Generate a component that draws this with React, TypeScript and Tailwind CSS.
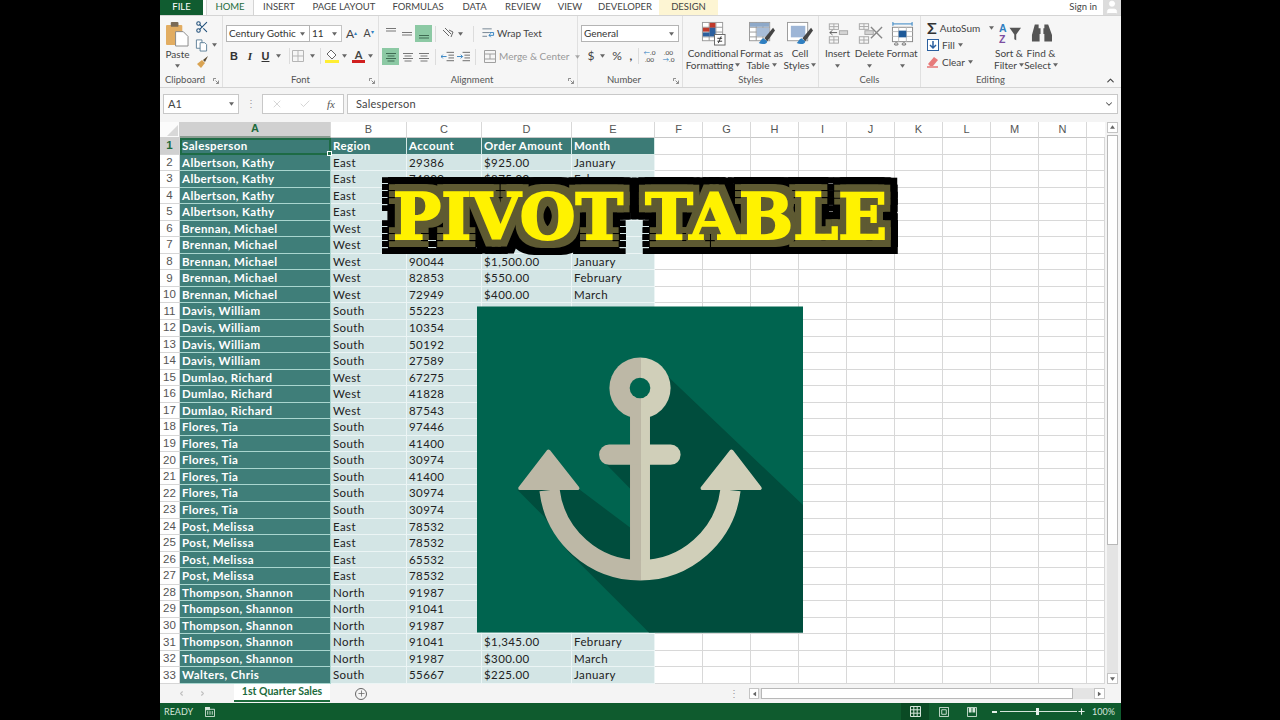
import type { ReactNode } from "react";
import { Scissors, Check, X, Plus, ChevronDown, ChevronUp, ChevronRight, ChevronLeft, User } from "lucide-react";

const uiFont = "font-['Lato',sans-serif]";

const tabs = [
  { label: "HOME", w: "w-[48px]" },
  { label: "INSERT", w: "w-[50px]" },
  { label: "PAGE LAYOUT", w: "w-[80px]" },
  { label: "FORMULAS", w: "w-[68px]" },
  { label: "DATA", w: "w-[45px]" },
  { label: "REVIEW", w: "w-[52px]" },
  { label: "VIEW", w: "w-[42px]" },
  { label: "DEVELOPER", w: "w-[68px]" },
];

const columns = ["F", "G", "H", "I", "J", "K", "L", "M", "N"];

type Row = [string, string, string?, string?, string?];

const rows: Row[] = [
  ["Albertson, Kathy", "East", "29386", "$925.00", "January"],
  ["Albertson, Kathy", "East", "74830", "$875.00", "February"],
  ["Albertson, Kathy", "East"],
  ["Albertson, Kathy", "East"],
  ["Brennan, Michael", "West"],
  ["Brennan, Michael", "West"],
  ["Brennan, Michael", "West", "90044", "$1,500.00", "January"],
  ["Brennan, Michael", "West", "82853", "$550.00", "February"],
  ["Brennan, Michael", "West", "72949", "$400.00", "March"],
  ["Davis, William", "South", "55223"],
  ["Davis, William", "South", "10354"],
  ["Davis, William", "South", "50192"],
  ["Davis, William", "South", "27589"],
  ["Dumlao, Richard", "West", "67275"],
  ["Dumlao, Richard", "West", "41828"],
  ["Dumlao, Richard", "West", "87543"],
  ["Flores, Tia", "South", "97446"],
  ["Flores, Tia", "South", "41400"],
  ["Flores, Tia", "South", "30974"],
  ["Flores, Tia", "South", "41400"],
  ["Flores, Tia", "South", "30974"],
  ["Flores, Tia", "South", "30974"],
  ["Post, Melissa", "East", "78532"],
  ["Post, Melissa", "East", "78532"],
  ["Post, Melissa", "East", "65532"],
  ["Post, Melissa", "East", "78532"],
  ["Thompson, Shannon", "North", "91987"],
  ["Thompson, Shannon", "North", "91041"],
  ["Thompson, Shannon", "North", "91987"],
  ["Thompson, Shannon", "North", "91041", "$1,345.00", "February"],
  ["Thompson, Shannon", "North", "91987", "$300.00", "March"],
  ["Walters, Chris", "South", "55667", "$225.00", "January"],
];

const gridCols = "grid grid-rows-[minmax(0,1fr)] grid-cols-[20px_151px_76px_75px_90px_83px_repeat(9,48px)_18px]";
const cellFont = "font-['Lato',sans-serif] text-[11.5px] tracking-[0.4px] whitespace-nowrap";
const cellText = `${cellFont} leading-[15px] pl-[2px] overflow-hidden`;

const Caret = ({ className = "" }: { className?: string }) => (
  <svg viewBox="0 0 6 4" className={`w-[5px] h-[4px] shrink-0 ${className}`}>
    <path d="M0 0h6L3 4z" fill="#666" />
  </svg>
);

const Sep = ({ className = "h-[16px]" }: { className?: string }) => (
  <div className={`w-px bg-[#dcdcdc] shrink-0 ${className}`} />
);

const Lines = ({ widths, y = 0, green = false }: { widths: number[]; y?: number; green?: boolean }) => (
  <svg viewBox="0 0 12 12" className="w-[12px] h-[12px]">
    {widths.map((w, i) => (
      <rect key={i} x={(12 - w) / 2} y={y + i * 2.5} width={w} height="1" fill={green ? "#3f6b52" : "#777"} />
    ))}
  </svg>
);

const Group = ({ w, label, launcher, shift, children }: { w: string; label: string; launcher?: boolean; shift?: boolean; children: ReactNode }) => (
  <div className={`${w} h-full flex flex-col border-r border-[#e0e0e0] relative shrink-0`}>
    <div className="flex-1 flex min-h-0">{children}</div>
    <div className={`h-[14px] flex items-center justify-center text-[9.5px] text-[#555] ${shift ? "pr-[12px]" : ""}`}>{label}</div>
    {launcher && (
      <svg viewBox="0 0 7 7" className="absolute right-[3px] bottom-[3px] w-[6px] h-[6px]">
        <path d="M.5.5h3M.5.5v3M6.5 3v3.500h-3M3 3l3 3" stroke="#777" fill="none" />
      </svg>
    )}
  </div>
);

const BigButton = ({ w, lines, caret, children }: { w: string; lines: string[]; caret?: boolean; children: ReactNode }) => (
  <div className={`${w} flex flex-col items-center shrink-0`}>
    <div className="h-[26px] mt-[4px] flex items-center justify-center">{children}</div>
    <div className="mt-[1px] text-[10px] leading-[12px] text-[#444] text-center whitespace-nowrap flex flex-col items-center">
      {lines.map((l, i) => (
        <span key={l} className="flex items-center gap-[2px]">
          {l}
          {caret && lines.length > 1 && i === lines.length - 1 && <Caret />}
        </span>
      ))}
      {caret && lines.length === 1 && <Caret className="mt-[5px]" />}
    </div>
  </div>
);

const MiniTable = () => (
  <g stroke="#9a9a9a" fill="none" strokeWidth="1">
    <rect x="1.500" y="1.500" width="21" height="19" fill="#fff" />
    <path d="M1.500 6.500h21M1.500 11.500h21M1.500 16.500h21M8.500 1.500v19M15.500 1.500v19" />
  </g>
);

const ConditionalIcon = () => (
  <svg viewBox="0 0 26 26" className="w-[25px] h-[25px]">
    <MiniTable />
    <rect x="9" y="2" width="6" height="5" fill="#c0392b" />
    <rect x="2" y="7" width="7" height="4" fill="#c0392b" />
    <rect x="9" y="7" width="6" height="9" fill="#2b5f9e" />
    <rect x="2" y="12" width="7" height="4" fill="#2b5f9e" />
    <rect x="14" y="14" width="11" height="11" fill="#fff" stroke="#666" />
    <path d="M17 18h5M17 21h5M18 23l3-7" stroke="#333" strokeWidth="1" fill="none" />
  </svg>
);

const Brush = () => (
  <g>
    <path d="M26 7 17 18l3 3L28 10z" fill="#444" />
    <path d="M16 18c-3 1-3 4-5 5 4 2 9 1 9-2z" fill="#2f7fc1" />
  </g>
);

const TableIcon = () => (
  <svg viewBox="0 0 29 26" className="w-[28px] h-[25px]">
    <MiniTable />
    <rect x="2" y="2" width="20" height="4" fill="#8ea9c9" />
    <rect x="9" y="7" width="13" height="9" fill="#a8bdd8" />
    <Brush />
  </svg>
);

const StylesIcon = () => (
  <svg viewBox="0 0 29 26" className="w-[28px] h-[25px]">
    <rect x="1.500" y="1.500" width="21" height="19" fill="#fff" stroke="#9a9a9a" />
    <rect x="5" y="5" width="15" height="12" fill="#9db5d6" />
    <Brush />
  </svg>
);

const InsertIcon = () => (
  <svg viewBox="0 0 24 24" className="w-[22px] h-[23px]" fill="none" stroke="#a5a5a5">
    <rect x="2.500" y="1.500" width="10" height="6" />
    <path d="M7.500 1.500v6M2.500 4.500h10" />
    <rect x="2.500" y="15.500" width="10" height="7" />
    <path d="M7.500 15.500v7M2.500 19h10" />
    <path d="M11 11H3m3-2.500L3 11l3 2.500" stroke="#555" />
    <rect x="13.500" y="9" width="9" height="4" fill="#d5d5d5" />
  </svg>
);

const DeleteIcon = () => (
  <svg viewBox="0 0 28 24" className="w-[26px] h-[23px]" fill="none" stroke="#a5a5a5">
    <rect x="2.500" y="1.500" width="10" height="6" />
    <path d="M7.500 1.500v6M2.500 4.500h10" />
    <rect x="2.500" y="15.500" width="10" height="7" />
    <path d="M7.500 15.500v7M2.500 19h10" />
    <rect x="8.500" y="9" width="9" height="4" fill="#d5d5d5" />
    <path d="m15 5 12 12M27 5 15 17" stroke="#888" strokeWidth="1.500" />
  </svg>
);

const FormatIcon = () => (
  <svg viewBox="0 0 24 26" className="w-[23px] h-[25px]" fill="none">
    <path d="M2 3h20M2 1v4M22 1v4" stroke="#2f7fc1" />
    <rect x="1.500" y="6.500" width="21" height="15" stroke="#888" fill="#fff" />
    <path d="M1.500 11h21M1.500 16h21M8 6.500v15M16 6.500v15" stroke="#bbb" />
    <rect x="8" y="10" width="8" height="7" fill="#1f5a99" />
    <path d="M4 25c-2-3 5-3 3 0zM12 25c-2-3 5-3 3 0z" stroke="#666" />
  </svg>
);

const SheetHeader = () => (
  <div className={`${gridCols} h-[16px] text-[11px] text-[#555]`}>
    <div className="relative bg-[#fbfbfb] border-r border-b border-[#d0d0d0]">
      <svg viewBox="0 0 12 12" className="absolute right-[1px] bottom-[1px] w-[11px] h-[11px]">
        <path d="M12 0v12H0z" fill="#d8d8d8" />
      </svg>
    </div>
    {["A", "B", "C", "D", "E", ...columns].map((c) => (
      <div
        key={c}
        className={`flex items-center justify-center pb-[1px] border-r border-[#d8d8d8] font-['Liberation_Sans',sans-serif] ${
          c === "A" ? "bg-[#d0d0d0] text-[#1d6b3c] font-bold border-b-2 border-b-[#8a9c91]" : "bg-white border-b border-b-[#c8c8c8]"
        }`}
      >
        {c}
      </div>
    ))}
    <div className="bg-white border-b border-[#d0d0d0]" />
  </div>
);

const RowNumber = ({ n }: { n: number }) => (
  <div
    className={`flex items-center justify-center border-r border-b border-[#d6d6d6] font-['Liberation_Sans',sans-serif] text-[11.5px] ${
      n === 1 ? "bg-[#d0d0d0] text-[#1d6b3c] font-bold" : "bg-white text-[#555]"
    }`}
  >
    {n}
  </div>
);

const EmptyCells = () => (
  <>
    {columns.map((c) => (
      <div key={c} className="border-r border-b border-[#d8d8d8] bg-white" />
    ))}
    <div className="border-b border-[#d8d8d8] border-r bg-white" />
  </>
);

const HeaderRow = () => (
  <div className={`${gridCols} h-[16.55px]`}>
    <RowNumber n={1} />
    <div className={`${cellFont} relative bg-[#3c7b76] text-white font-bold border-2 border-[#1d6b45] leading-[11px]`}>
      Salesperson
      <span className="absolute -right-[3px] -bottom-[3px] w-[5px] h-[5px] bg-[#1d6b45] border border-white" />
    </div>
    {["Region", "Account", "Order Amount", "Month"].map((h) => (
      <div key={h} className={`${cellText} bg-[#3c7b76] text-white font-bold border-r border-b border-[#d5e9e6]`}>
        {h}
      </div>
    ))}
    <EmptyCells />
  </div>
);

const DataRow = ({ row, n }: { row: Row; n: number }) => (
  <div className={`${gridCols} h-[16.55px]`}>
    <RowNumber n={n} />
    <div className={`${cellText} bg-[#3f7e79] text-white font-bold border-b border-r border-[#a9d6cf]`}>{row[0]}</div>
    {[row[1], row[2], row[3], row[4]].map((v, i) => (
      <div key={i} className={`${cellText} bg-[#d3e5e5] text-[#222] border-b border-r border-[#ecf5f5]`}>
        {v}
      </div>
    ))}
    <EmptyCells />
  </div>
);

const Ribbon = () => (
  <div className={`h-[72px] flex bg-[#f6f6f6] border-b border-[#d4d4d4] ${uiFont}`}>
    <Group w="w-[63px]" label="Clipboard" launcher shift>
      <div className="w-[35px] flex flex-col items-center shrink-0 pt-[6px]">
        <svg viewBox="0 0 24 26" className="w-[23px] h-[25px]">
          <rect x="0" y="3" width="17" height="21" rx="1" fill="#e2ad62" />
          <rect x="5" y="0" width="8" height="5" rx="1" fill="#7a6a55" />
          <path d="M10 10h8l5 5v10H10z" fill="#fff" stroke="#888" />
        </svg>
        <span className="mt-[1px] text-[10px] leading-[12px] text-[#444]">Paste</span>
        <Caret className="mt-[4px]" />
      </div>
      <div className="flex flex-col pt-[4px] gap-[3.500px]">
        <Scissors size={14} strokeWidth={1.8} className="text-[#1f4f7a]" />
        <div className="flex items-center gap-[4px]">
          <svg viewBox="0 0 14 14" className="w-[13px] h-[14px]" fill="#fff" stroke="#5b7d96">
            <path d="M1.500 1.500h6v9h-6z" />
            <path d="M5.500 4.500h5l2 2v7h-7z" />
          </svg>
          <Caret />
        </div>
        <svg viewBox="0 0 14 14" className="w-[14px] h-[14px]">
          <path d="M13 1 8 5l2 2z" fill="#5a4a30" />
          <path d="M7 5 2 9l4 4 4-5z" fill="#d9a352" />
        </svg>
      </div>
    </Group>

    <Group w="w-[156px]" label="Font" launcher>
      <div className="flex flex-col pl-[3px] pt-[9px] gap-[6px]">
        <div className="flex items-center h-[17px]">
          <div className="w-[84px] h-full bg-white border border-[#b4b4b4] flex items-center justify-between pl-[2px] pr-[4px] text-[10px] text-[#333]">
            Century Gothic
            <Caret />
          </div>
          <div className="w-[32px] h-full bg-white border border-l-0 border-[#c4c4c4] flex items-center justify-between pl-[2px] pr-[4px] text-[10px] text-[#333]">
            11
            <Caret />
          </div>
          <span className="ml-[1px] w-[17px] text-center text-[12px] text-[#444]">
            A<sup className="text-[6px] text-[#2f7fc1]">▴</sup>
          </span>
          <span className="w-[17px] text-center text-[10.5px] text-[#444]">
            A<sup className="text-[6px] text-[#2f7fc1]">▾</sup>
          </span>
        </div>
        <div className="flex items-center h-[16px] text-[#333] text-[11px]">
          <span className="w-[16px] text-center font-bold font-['Liberation_Sans',sans-serif]">B</span>
          <span className="w-[16px] text-center italic font-bold font-['Liberation_Serif',serif]">I</span>
          <span className="w-[15px] text-center underline font-bold font-['Liberation_Sans',sans-serif]">U</span>
          <Caret className="ml-[3px] mr-[8px]" />
          <Sep />
          <svg viewBox="0 0 12 12" className="w-[12px] h-[12px] ml-[2px]" fill="none" stroke="#b5b5b5">
            <path d="M.5.5h11v11H.5zM6 .5v11M.5 6h11" />
          </svg>
          <Caret className="ml-[6px] mr-[5px]" />
          <Sep />
          <svg viewBox="0 0 14 14" className="w-[14px] h-[14px] ml-[4px]">
            <path d="M6 1l5 5-4 4-5-5z" fill="#fff" stroke="#666" />
            <rect x="0" y="11" width="14" height="3" fill="#ffee33" />
          </svg>
          <Caret className="ml-[3px] mr-[5px]" />
          <span className="relative w-[13px] h-[14px] text-center text-[11px] leading-[11px] font-bold border-b-[3px] border-[#d11f1f] text-[#444]">A</span>
          <Caret className="ml-[3px]" />
        </div>
      </div>
    </Group>

    <Group w="w-[199px]" label="Alignment" launcher shift>
      <div className="flex flex-col pl-[3px] pt-[9px] gap-[6px]">
        <div className="flex items-center h-[17px]">
          <div className="w-[17px] flex justify-center"><Lines widths={[10, 10]} /></div>
          <div className="w-[16px] flex justify-center"><Lines widths={[10, 10]} y={4} /></div>
          <div className="w-[17px] h-[17px] bg-[#8cc9a4] flex justify-center items-center"><Lines widths={[10, 10]} y={7} green /></div>
          <Sep className="h-[16px] ml-[3px]" />
          <svg viewBox="0 0 14 14" className="w-[14px] h-[14px] ml-[5px]" fill="none" stroke="#666">
            <path d="M2 3 8 9M4 1l6 6M8 3l4 2-2 5" />
          </svg>
          <Caret className="ml-[3px] mr-[10px]" />
          <Sep />
          <svg viewBox="0 0 14 14" className="w-[14px] h-[13px] ml-[7px] mr-[2px]" fill="none" stroke="#6f7f8f">
            <path d="M1 2h10M1 6h8M1 10h5" />
            <path d="M9 6h4v3H8m2-2-2 2 2 2" stroke="#2f7fc1" />
          </svg>
          <span className="text-[10px] text-[#444] whitespace-nowrap">Wrap Text</span>
        </div>
        <div className="flex items-center h-[17px]">
          <div className="w-[17px] h-[17px] bg-[#8cc9a4] flex justify-center items-center"><Lines widths={[10, 7, 10, 7]} y={2} green /></div>
          <div className="w-[16px] flex justify-center ml-[1px]"><Lines widths={[10, 7, 10, 7]} y={2} /></div>
          <div className="w-[16px] flex justify-center"><Lines widths={[10, 7, 10, 7]} y={2} /></div>
          <Sep className="h-[16px] ml-[3px]" />
          <svg viewBox="0 0 14 12" className="w-[13px] h-[12px] ml-[5px]" fill="none" stroke="#666">
            <path d="M6 1h8M8 4h6M8 7h6M6 10h8" />
            <path d="M6 5.500H0m2-2-2 2 2 2" stroke="#2f7fc1" />
          </svg>
          <svg viewBox="0 0 14 12" className="w-[13px] h-[12px] ml-[3px] mr-[5px]" fill="none" stroke="#666">
            <path d="M6 1h8M8 4h6M8 7h6M6 10h8" />
            <path d="M0 5.500h6m-2-2 2 2-2 2" stroke="#2f7fc1" />
          </svg>
          <Sep />
          <svg viewBox="0 0 12 13" className="w-[12px] h-[13px] ml-[8px] mr-[3px]" fill="none" stroke="#a0a0a0">
            <path d="M.5.5h11v12H.5zM.5 4h11M.5 9h11M6 4v5" />
          </svg>
          <span className="text-[10px] text-[#999] whitespace-nowrap">Merge &amp; Center</span>
          <Caret className="ml-[6px] opacity-50" />
        </div>
      </div>
    </Group>

    <Group w="w-[105px]" label="Number" launcher shift>
      <div className="flex flex-col pl-[3px] pt-[9px] gap-[6px]">
        <div className="w-[98px] h-[17px] bg-white border border-[#b4b4b4] flex items-center justify-between pl-[2px] pr-[4px] text-[10px] text-[#333]">
          General
          <Caret />
        </div>
        <div className="flex items-center h-[16px] pl-[5px] text-[12px] text-[#444]">
          <span className="w-[10px] text-center">$</span>
          <Caret className="ml-[4px] mr-[5px]" />
          <span className="w-[14px] text-center">%</span>
          <span className="w-[14px] text-center font-bold">,</span>
          <Sep className="h-[16px] mr-[1px]" />
          <span className="w-[19px] text-center text-[6.5px] leading-[7px] text-[#444]"><span className="text-[#2f7fc1]">←</span>.0<br />.00</span>
          <span className="w-[19px] text-center text-[6.5px] leading-[7px] text-[#444]">.00<br /><span className="text-[#2f7fc1]">→</span>.0</span>
        </div>
      </div>
    </Group>

    <Group w="w-[136px]" label="Styles">
      <div className="flex pl-[3px]">
        <BigButton w="w-[54px]" lines={["Conditional", "Formatting"]} caret><ConditionalIcon /></BigButton>
        <BigButton w="w-[43px]" lines={["Format as", "Table"]} caret><TableIcon /></BigButton>
        <BigButton w="w-[34px]" lines={["Cell", "Styles"]} caret><StylesIcon /></BigButton>
      </div>
    </Group>

    <Group w="w-[102px]" label="Cells">
      <div className="flex pl-[3px]">
        <BigButton w="w-[31px]" lines={["Insert"]} caret><InsertIcon /></BigButton>
        <BigButton w="w-[33px]" lines={["Delete"]} caret><DeleteIcon /></BigButton>
        <BigButton w="w-[32px]" lines={["Format"]} caret><FormatIcon /></BigButton>
      </div>
    </Group>

    <div className="flex-1 h-full flex flex-col relative">
      <div className="flex-1 flex min-h-0">
        <div className="w-[72px] pl-[6px] pt-[4px] flex flex-col gap-[1px] text-[10px] text-[#444] shrink-0">
          <div className="flex items-center h-[16px] gap-[3px]">
            <span className="w-[12px] text-[16px] leading-[16px] font-bold text-center text-[#333]">Σ</span>
            AutoSum
            <Caret className="ml-[6px]" />
          </div>
          <div className="flex items-center h-[16px] gap-[3px]">
            <svg viewBox="0 0 12 12" className="w-[12px] h-[12px]">
              <rect x=".5" y=".5" width="11" height="11" fill="#fff" stroke="#2b5f9e" />
              <path d="M6 2v7M3 6l3 3 3-3" stroke="#2b5f9e" strokeWidth="1.500" fill="none" />
            </svg>
            Fill
            <Caret />
          </div>
          <div className="flex items-center h-[16px] gap-[3px]">
            <svg viewBox="0 0 12 12" className="w-[12px] h-[12px]">
              <path d="M7 1l4 3-5 6H3L1 8z" fill="#e77a7a" />
              <path d="M0 11h11" stroke="#d33" />
            </svg>
            Clear
            <Caret />
          </div>
        </div>
        <BigButton w="w-[32px]" lines={["Sort &", "Filter"]} caret>
          <svg viewBox="0 0 24 24" className="w-[23px] h-[23px]">
            <path d="M12 6h12l-5 7v6l-2-1v-5z" fill="#555" />
            <text x="1" y="10" fontSize="11" fill="#2f7fc1" fontFamily="Liberation Sans" fontWeight="bold">A</text>
            <text x="1" y="22" fontSize="11" fill="#7c4ea0" fontFamily="Liberation Sans" fontWeight="bold">Z</text>
          </svg>
        </BigButton>
        <BigButton w="w-[32px]" lines={["Find &", "Select"]} caret>
          <svg viewBox="0 0 22 22" className="w-[21px] h-[22px]" fill="#555">
            <path d="M4 2h4v4h2v6H9v8H1v-7zM14 2h4l4 11v7h-8v-8h-1V6h1z" />
          </svg>
        </BigButton>
      </div>
      <div className="h-[14px] w-[139px] flex items-center justify-center text-[9.5px] text-[#555]">Editing</div>
      <ChevronUp size={11} strokeWidth={2.5} className="absolute right-[5px] bottom-[1px] text-[#444]" />
    </div>
  </div>
);

const FormulaBar = () => (
  <div className={`h-[20px] mt-[6px] flex items-stretch px-[3px] ${uiFont}`}>
    <div className="w-[76px] bg-white border border-[#c8c8c8] flex items-center justify-between pl-[4px] pr-[4px] text-[11px] text-[#444]">
      A1
      <Caret />
    </div>
    <div className="w-[23px] flex items-center justify-center text-[#999] text-[10px]">⋮</div>
    <div className="w-[82px] bg-white border border-[#c8c8c8] flex items-center justify-between px-[8px]">
      <X size={12} strokeWidth={1.2} className="text-[#bbb]" />
      <Check size={12} strokeWidth={1.2} className="text-[#bbb]" />
      <span className="font-['Liberation_Serif',serif] italic text-[11px] text-[#555]">fx</span>
    </div>
    <div className="flex-1 ml-[3px] bg-white border border-[#c8c8c8] flex items-center justify-between pl-[8px] pr-[3px] text-[11px] text-[#444] tracking-[0.2px]">
      Salesperson
      <ChevronDown size={10} strokeWidth={2.5} className="text-[#555]" />
    </div>
  </div>
);

const ScrollButton = ({ children, className = "" }: { children: ReactNode; className?: string }) => (
  <div className={`bg-white border border-[#c4c4c4] flex items-center justify-center shrink-0 ${className}`}>{children}</div>
);

const TabStrip = () => (
  <div className={`h-[19px] flex items-center bg-[#f4f4f4] ${uiFont}`}>
    <div className="w-[74px] flex items-center justify-start gap-[14px] pl-[18px] text-[#c0c0c0] shrink-0">
      <ChevronLeft size={7} strokeWidth={4} />
      <ChevronRight size={7} strokeWidth={4} />
    </div>
    <div className="w-[96px] h-[18px] self-start bg-white border-b-2 border-[#1d6b3c] text-[#1d6b3c] font-bold text-[10.5px] flex items-center justify-center shrink-0">
      1st Quarter Sales
    </div>
    <div className="w-[62px] flex justify-center shrink-0">
      <div className="w-[12px] h-[12px] rounded-full border border-[#666] flex items-center justify-center">
        <Plus size={9} strokeWidth={2} className="text-[#666]" />
      </div>
    </div>
    <div className="w-[351px] text-right text-[#999] text-[10px] pr-[4px] shrink-0">⋮</div>
    <div className="flex items-center h-[11px] ml-[6px] w-[356px] bg-[#e4e4e4] shrink-0">
      <ScrollButton className="w-[10px] h-[11px]"><Caret className="rotate-90" /></ScrollButton>
      <div className="w-[312px] h-[11px] bg-white border border-[#b8b8b8] ml-[2px] shrink-0" />
      <div className="flex-1" />
      <ScrollButton className="w-[11px] h-[11px]"><Caret className="-rotate-90" /></ScrollButton>
    </div>
  </div>
);

const StatusBar = () => (
  <div className={`h-[17px] flex items-center bg-[#0f5b2e] text-[#d5e5da] text-[9px] ${uiFont}`}>
    <span className="ml-[4px] w-[41px]">READY</span>
    <svg viewBox="0 0 11 11" className="w-[10px] h-[10px]" fill="none" stroke="#d5e5da">
      <path d="M.5 2.500h10v8H.5zM3 4.500v4M5.500 4.500v4M8 4.500v4" />
      <rect x="0" y="0" width="5" height="3" fill="#d5e5da" />
    </svg>
    <div className="ml-[686px] w-[28px] h-full bg-[#0a4a24] flex items-center justify-center shrink-0">
      <svg viewBox="0 0 11 11" className="w-[11px] h-[11px]" fill="none" stroke="#d5e5da">
        <path d="M.5.5h10v10H.5zM3.800.5v10M7.200.5v10M.5 3.800h10M.5 7.200h10" />
      </svg>
    </div>
    <div className="w-[29px] flex justify-center shrink-0">
      <svg viewBox="0 0 11 11" className="w-[10px] h-[10px]" fill="none" stroke="#d5e5da">
        <path d="M.5.5h10v10H.5zM3 3h5v5H3z" />
      </svg>
    </div>
    <div className="w-[27px] flex justify-center shrink-0">
      <svg viewBox="0 0 11 11" className="w-[10px] h-[10px]">
        <path d="M.5.5h10v10H.5z" fill="none" stroke="#d5e5da" />
        <path d="M2 1h3v5H2zM6 1h3v5H6z" fill="#d5e5da" />
      </svg>
    </div>
    <span className="ml-[7px] w-[5px] h-[2px] bg-[#e6f0ea] shrink-0" />
    <div className="relative ml-[3px] w-[77px] h-px bg-[#d5e5da] shrink-0">
      <span className="absolute left-[36px] -top-[3px] w-[3px] h-[7px] bg-[#e6f0ea]" />
    </div>
    <Plus size={9} strokeWidth={3} className="text-[#e6f0ea]" />
    <span className="ml-[6px]">100%</span>
  </div>
);

const AnchorShapes = ({ fill }: { fill: string }) => (
  <g fill={fill}>
    <circle cx="490" cy="245" r="92" />
    <rect x="460" y="300" width="60" height="510" />
    <rect x="367" y="415" width="245" height="61" rx="30" />
    <path d="M218 552A274 274 0 0 0 762 552" fill="none" stroke={fill} strokeWidth="61" />
    <path d="M215 436 302 546H130Z" stroke={fill} strokeWidth="12" strokeLinejoin="round" />
    <path d="M765 436 850 546H678Z" stroke={fill} strokeWidth="12" strokeLinejoin="round" />
  </g>
);

const AnchorImage = () => (
  <svg viewBox="0 0 980 980" className="absolute left-[477px] top-[306px] w-[326px] h-[327px]">
    <defs>
      <clipPath id="anchor-left"><rect x="0" y="0" width="493" height="980" /></clipPath>
      <clipPath id="anchor-right"><rect x="493" y="0" width="487" height="980" /></clipPath>
    </defs>
    <rect width="980" height="980" fill="#00644f" />
    <path d="M122 552 200 630 274 737 517 980H980V597L570 207 490 245 460 330V476H390L460 547V664L310 552Z" fill="#004d3d" />
    <g clipPath="url(#anchor-left)"><AnchorShapes fill="#bdb8a6" /></g>
    <g clipPath="url(#anchor-right)"><AnchorShapes fill="#d0cfb9" /></g>
    <circle cx="490" cy="245" r="31" fill="#00644f" />
  </svg>
);

const Title = () => (
  <div className="absolute left-[382px] top-[179px] w-[516px] h-[76px] flex items-center justify-center">
    <span className="font-['DejaVu_Serif',serif] font-bold text-[64px] leading-none whitespace-nowrap text-[#fff200] [-webkit-text-stroke:2px_#fff200] [filter:drop-shadow(6px_0_0_#5e5a32)_drop-shadow(-6px_0_0_#5e5a32)_drop-shadow(0_7px_0_#5e5a32)_drop-shadow(0_-7px_0_#5e5a32)_drop-shadow(7px_0_0_#000)_drop-shadow(-7px_0_0_#000)_drop-shadow(0_7px_0_#000)_drop-shadow(0_-7px_0_#000)]">
      PIVOT TABLE
    </span>
  </div>
);

export default function App() {
  return (
    <div className="relative w-[1280px] h-[720px] bg-black overflow-hidden">
      <div className="ml-[160px] w-[961px] h-full flex flex-col bg-[#f4f4f4] overflow-hidden">
        <div className={`h-[16px] flex items-stretch bg-white border-b border-[#d4d4d4] text-[9.5px] text-[#444] ${uiFont}`}>
          <div className="w-[43px] bg-[#105c30] text-white flex items-center justify-center">FILE</div>
          <div className="w-[3px]" />
          {tabs.map((t) => (
            <div
              key={t.label}
              className={`${t.w} flex items-center justify-center ${t.label === "HOME" ? "text-[#1d6b3c] bg-[#f6f6f6] border-x border-[#d4d4d4]" : ""}`}
            >
              {t.label}
            </div>
          ))}
          <div className="w-[59px] bg-[#fdf5d3] flex items-center justify-center">DESIGN</div>
          <div className="flex-1 flex items-center justify-end">
            <span className="mr-[6px]">Sign in</span>
            <div className="w-[18px] h-[15px] bg-[#dcdcdc] flex items-end justify-center overflow-hidden">
              <User size={16} fill="#fff" strokeWidth={1} className="text-white" />
            </div>
          </div>
        </div>

        <Ribbon />
        <FormulaBar />

        <div className="mt-[8px] flex">
          <div className="w-[945px] shrink-0">
            <SheetHeader />
            <HeaderRow />
            {rows.map((r, i) => (
              <DataRow key={i} row={r} n={i + 2} />
            ))}
          </div>
          <div className="ml-[2px] w-[11px] flex flex-col">
            <ScrollButton className="h-[11px] w-[11px]"><Caret className="rotate-180" /></ScrollButton>
            <div className="h-[410px] bg-white border border-[#b8b8b8] mt-[2px]" />
            <div className="flex-1 bg-[#e4e4e4]" />
            <ScrollButton className="h-[11px] w-[11px]"><Caret /></ScrollButton>
          </div>
        </div>

        <TabStrip />
        <StatusBar />
      </div>
      <Title />
      <AnchorImage />
    </div>
  );
}
